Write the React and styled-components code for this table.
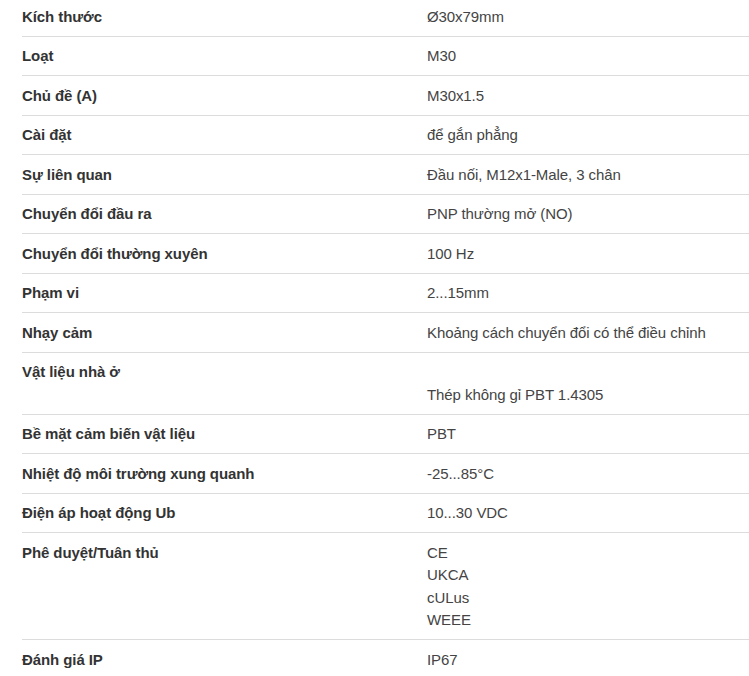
import React from 'react';
import styled, { createGlobalStyle } from 'styled-components';

const GlobalStyle = createGlobalStyle`
  html, body {
    margin: 0;
    padding: 0;
    background: #fff;
    overflow: hidden;
  }
`;

const SpecTable = styled.div`
  margin-top: -3px;
  padding-left: 22px;
  font-family: 'Liberation Sans', Arial, sans-serif;
  font-size: 15px;
  line-height: 22.5px;
  letter-spacing: -0.08px;
`;

const Row = styled.div`
  display: grid;
  grid-template-columns: 405px 1fr;
  align-items: start;
  padding: 8.5px 0 7.5px;
  border-bottom: 1px solid #dcdcdc;
`;

const Label = styled.div`
  font-weight: 700;
  color: #333;
`;

const Value = styled.div`
  color: #444;
  display: flex;
  flex-direction: column;
  padding-top: ${(p) => (p.$offset ? '22.5px' : '0')};
`;

const specs = [
  { label: 'Kích thước', values: ['Ø30x79mm'] },
  { label: 'Loạt', values: ['M30'] },
  { label: 'Chủ đề (A)', values: ['M30x1.5'] },
  { label: 'Cài đặt', values: ['để gắn phẳng'] },
  { label: 'Sự liên quan', values: ['Đầu nối, M12x1-Male, 3 chân'] },
  { label: 'Chuyển đổi đầu ra', values: ['PNP thường mở (NO)'] },
  { label: 'Chuyển đổi thường xuyên', values: ['100 Hz'] },
  { label: 'Phạm vi', values: ['2...15mm'] },
  { label: 'Nhạy cảm', values: ['Khoảng cách chuyển đổi có thể điều chỉnh'] },
  { label: 'Vật liệu nhà ở', values: ['Thép không gỉ PBT 1.4305'], offset: true },
  { label: 'Bề mặt cảm biến vật liệu', values: ['PBT'] },
  { label: 'Nhiệt độ môi trường xung quanh', values: ['-25...85°C'] },
  { label: 'Điện áp hoạt động Ub', values: ['10...30 VDC'] },
  { label: 'Phê duyệt/Tuân thủ', values: ['CE', 'UKCA', 'cULus', 'WEEE'] },
  { label: 'Đánh giá IP', values: ['IP67'] },
];

export default function App() {
  return (
    <>
      <GlobalStyle />
      <SpecTable>
        {specs.map((spec) => (
          <Row key={spec.label}>
            <Label>{spec.label}</Label>
            <Value $offset={spec.offset}>
              {spec.values.map((v) => (
                <span key={v}>{v}</span>
              ))}
            </Value>
          </Row>
        ))}
      </SpecTable>
    </>
  );
}
